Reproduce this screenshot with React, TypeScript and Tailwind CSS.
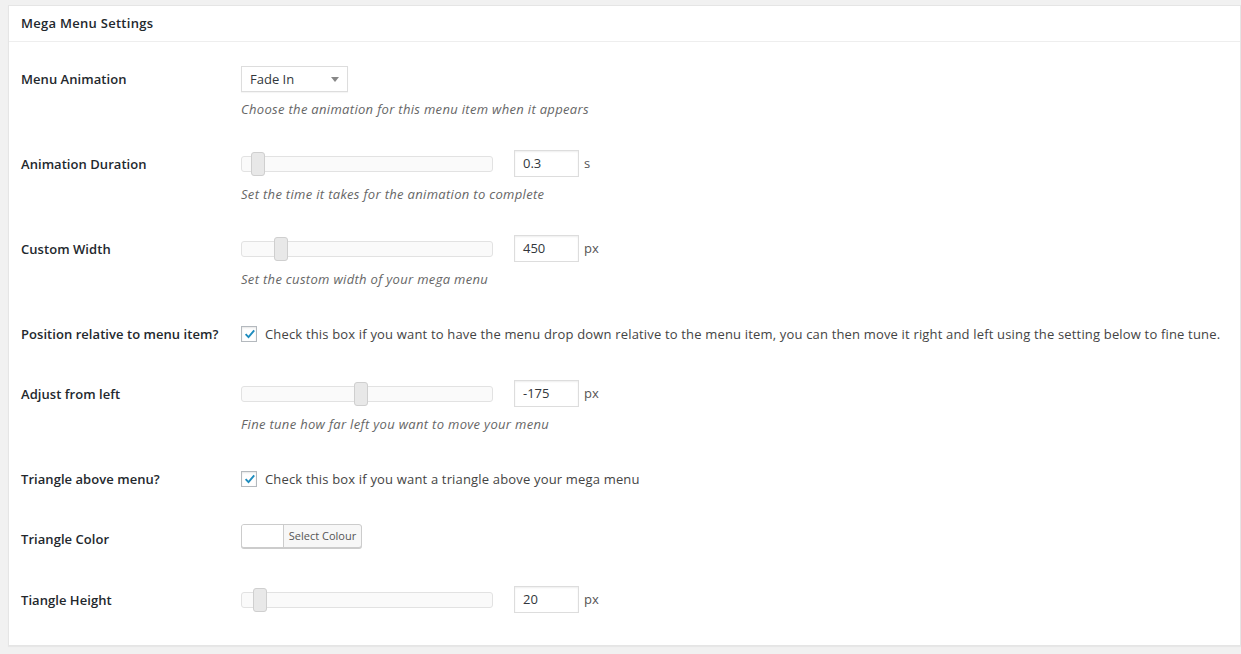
function Slider({ pos }: { pos: number }) {
  return (
    <div className="relative h-[16px] w-[252px] rounded-[3px] border border-[#e2e2e2] bg-[#fafafa]">
      <div
        className="absolute top-[-5px] h-[24px] w-[14px] rounded-[3px] border border-[#cfcfcf] bg-[#e8e8e8]"
        style={{ left: pos }}
      />
    </div>
  );
}

function NumberBox({ value, unit }: { value: string; unit: string }) {
  return (
    <div className="flex items-center">
      <div className="ml-[21px] flex h-[27px] w-[65px] items-center border border-[#dddddd] bg-white pl-[8px] text-[13px] text-[#32373c] shadow-[inset_0_1px_2px_rgba(0,0,0,0.07)]">
        {value}
      </div>
      <span className="ml-[5px] text-[13px] text-[#555]">{unit}</span>
    </div>
  );
}

function Desc({ children }: { children: string }) {
  return (
    <p className="mt-[8px] text-[13px] italic leading-[18px] tracking-[0.32px] text-[#666]">{children}</p>
  );
}

function Check({ text }: { text: string }) {
  return (
    <div className="flex items-center">
      <div className="relative h-[16px] w-[16px] border border-[#b4b9be] bg-white shadow-[inset_0_1px_2px_rgba(0,0,0,0.1)]">
        <svg viewBox="0 0 16 16" className="absolute left-[1px] top-[0px] h-[14px] w-[14px]">
          <path d="M3 8.2 L6.3 11.5 L12.8 3.8" fill="none" stroke="#1e8cbe" strokeWidth="2.2" />
        </svg>
      </div>
      <span className="ml-[8px] text-[13px] leading-[18px] tracking-[0.17px] text-[#444]">{text}</span>
    </div>
  );
}

function Label({ children, h }: { children: string; h: number }) {
  return (
    <div
      className="w-[220px] shrink-0 text-[13px] font-semibold tracking-[0.05px] text-[#23282d]"
      style={{ lineHeight: h + "px" }}
    >
      {children}
    </div>
  );
}

export default function App() {
  return (
    <div
      className="min-h-[654px] bg-[#f1f1f1] pl-[8px] pt-[5px] pb-[8px]"
      style={{ fontFamily: '"Segoe UI", "Open Sans", "Noto Sans", sans-serif' }}
    >
      <div className="h-[641px] w-[1233px] border border-[#e5e5e5] bg-white shadow-[0_1px_1px_rgba(0,0,0,0.04)]">
        <div className="flex h-[36px] items-center border-b border-[#eeeeee] pl-[12px] text-[13px] font-semibold tracking-[0.28px] text-[#23282d]">
          Mega Menu Settings
        </div>

        <div className="pl-[12px]">
          {/* Menu Animation */}
          <div className="mt-[24px] flex">
            <Label h={26}>Menu Animation</Label>
            <div>
              <div className="flex h-[26px] w-[107px] items-center justify-between border border-[#dddddd] bg-white pl-[8px] pr-[8px] pt-px text-[13px] text-[#32373c] shadow-[0_1px_1px_rgba(0,0,0,0.04)]">
                <span>Fade In</span>
                <svg viewBox="0 0 8 5" className="h-[5px] w-[8px]">
                  <path d="M0 0 L8 0 L4 5 Z" fill="#888" />
                </svg>
              </div>
              <Desc>Choose the animation for this menu item when it appears</Desc>
            </div>
          </div>

          {/* Animation Duration */}
          <div className="mt-[32px] flex">
            <Label h={29}>Animation Duration</Label>
            <div>
              <div className="flex h-[27px] items-center">
                <Slider pos={9} />
                <NumberBox value="0.3" unit="s" />
              </div>
              <Desc>Set the time it takes for the animation to complete</Desc>
            </div>
          </div>

          {/* Custom Width */}
          <div className="mt-[32px] flex">
            <Label h={29}>Custom Width</Label>
            <div>
              <div className="flex h-[27px] items-center">
                <Slider pos={32} />
                <NumberBox value="450" unit="px" />
              </div>
              <Desc>Set the custom width of your mega menu</Desc>
            </div>
          </div>

          {/* Position relative */}
          <div className="mt-[37px] flex">
            <Label h={18}>Position relative to menu item?</Label>
            <Check text="Check this box if you want to have the menu drop down relative to the menu item, you can then move it right and left using the setting below to fine tune." />
          </div>

          {/* Adjust from left */}
          <div className="mt-[37px] flex">
            <Label h={29}>Adjust from left</Label>
            <div>
              <div className="flex h-[27px] items-center">
                <Slider pos={112} />
                <NumberBox value="-175" unit="px" />
              </div>
              <Desc>Fine tune how far left you want to move your menu</Desc>
            </div>
          </div>

          {/* Triangle above */}
          <div className="mt-[37px] flex">
            <Label h={18}>Triangle above menu?</Label>
            <Check text="Check this box if you want a triangle above your mega menu" />
          </div>

          {/* Triangle Color */}
          <div className="mt-[36px] flex">
            <Label h={30}>Triangle Color</Label>
            <div className="flex h-[24px] w-[121px] overflow-hidden rounded-[3px] border border-[#cccccc] bg-[#f7f7f7] shadow-[0_1px_0_#cccccc]">
              <div className="w-[42px] border-r border-[#cccccc] bg-white" />
              <div className="flex flex-1 items-center justify-center text-[11px] text-[#555]">Select Colour</div>
            </div>
          </div>

          {/* Tiangle Height */}
          <div className="mt-[32px] flex">
            <Label h={29}>Tiangle Height</Label>
            <div className="flex h-[27px] items-center">
              <Slider pos={11} />
              <NumberBox value="20" unit="px" />
            </div>
          </div>
        </div>
      </div>
    </div>
  );
}
